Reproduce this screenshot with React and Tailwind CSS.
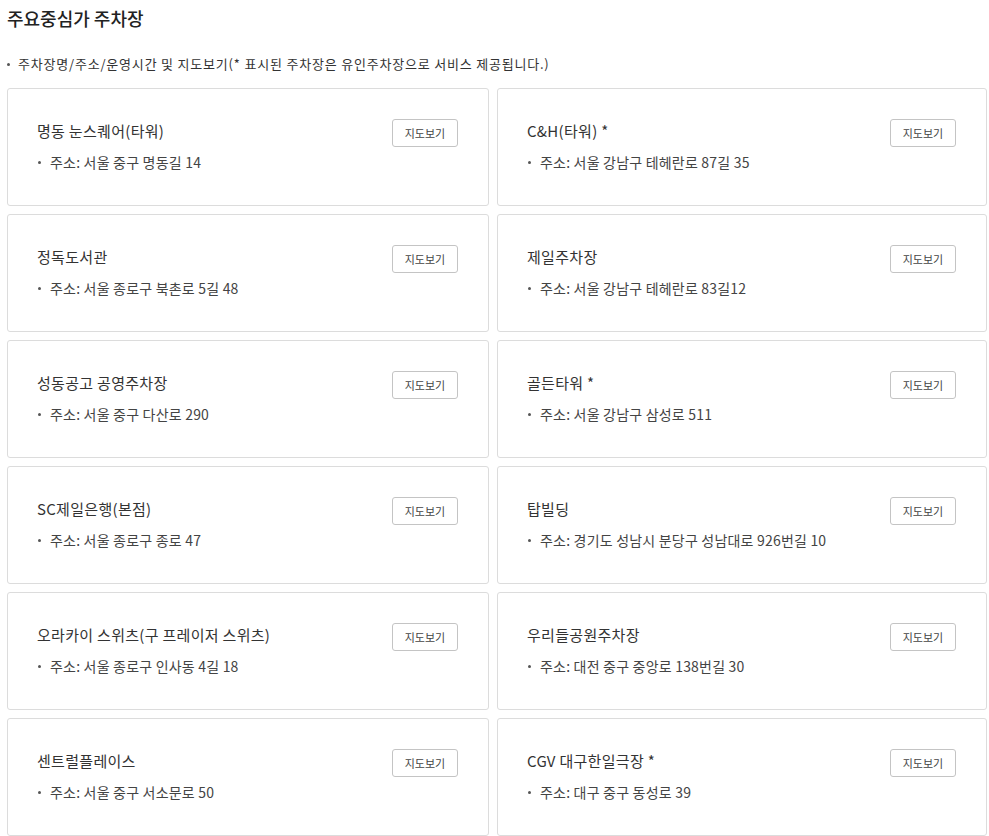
import React from "react";

const lots = [
  { name: "명동 눈스퀘어(타워)", addr: "서울 중구 명동길 14" },
  { name: "C&H(타워) *", addr: "서울 강남구 테헤란로 87길 35" },
  { name: "정독도서관", addr: "서울 종로구 북촌로 5길 48" },
  { name: "제일주차장", addr: "서울 강남구 테헤란로 83길12" },
  { name: "성동공고 공영주차장", addr: "서울 중구 다산로 290" },
  { name: "골든타워 *", addr: "서울 강남구 삼성로 511" },
  { name: "SC제일은행(본점)", addr: "서울 종로구 종로 47" },
  { name: "탑빌딩", addr: "경기도 성남시 분당구 성남대로 926번길 10" },
  { name: "오라카이 스위츠(구 프레이저 스위츠)", addr: "서울 종로구 인사동 4길 18" },
  { name: "우리들공원주차장", addr: "대전 중구 중앙로 138번길 30" },
  { name: "센트럴플레이스", addr: "서울 중구 서소문로 50" },
  { name: "CGV 대구한일극장 *", addr: "대구 중구 동성로 39" },
];

export default function App() {
  return (
    <div
      className="w-[989px] h-[836px] overflow-hidden bg-white text-[#333]"
      style={{ fontFamily: '"Noto Sans CJK KR", "Noto Sans", sans-serif' }}
    >
      {/* heading */}
      <h2 className="pl-[7px] pt-[5px] h-[32px] text-[18px] leading-[26px] font-medium text-[#222]">
        주요중심가 주차장
      </h2>

      <p className="flex items-center pl-[7px] mt-[21px] h-[22px] text-[13px] tracking-[0.8px] text-[#333]">
        <span className="w-[3px] h-[3px] bg-[#555] rounded-full mr-[8px]" />
        주차장명/주소/운영시간 및 지도보기(* 표시된 주차장은 유인주차장으로 서비스 제공됩니다.)
      </p>

      {/* cards */}
      <div className="grid grid-cols-[482px_490px] gap-x-[8px] gap-y-[8px] pl-[7px] mt-[13px]">
        {lots.map((lot, i) => (
          <div
            key={i}
            className="h-[118px] border border-[#dcdcdc] rounded-[3px] flex items-start justify-between pl-[29px] pr-[30px] pt-[30px]"
          >
            <div>
              <p className="text-[15px] leading-[22px] mt-[1px] tracking-[0.3px] text-[#333]">{lot.name}</p>
              <p className="flex items-center mt-[10px] text-[14px] leading-[20px] tracking-[0.2px] text-[#444]">
                <span className="w-[3px] h-[3px] bg-[#555] rounded-full ml-[1px] mr-[9px]" />
                주소: {lot.addr}
              </p>
            </div>
            <button className="w-[66px] h-[28px] border border-[#c4c4c4] rounded-[3px] text-[11px] text-[#444] bg-white">
              지도보기
            </button>
          </div>
        ))}
      </div>
    </div>
  );
}
